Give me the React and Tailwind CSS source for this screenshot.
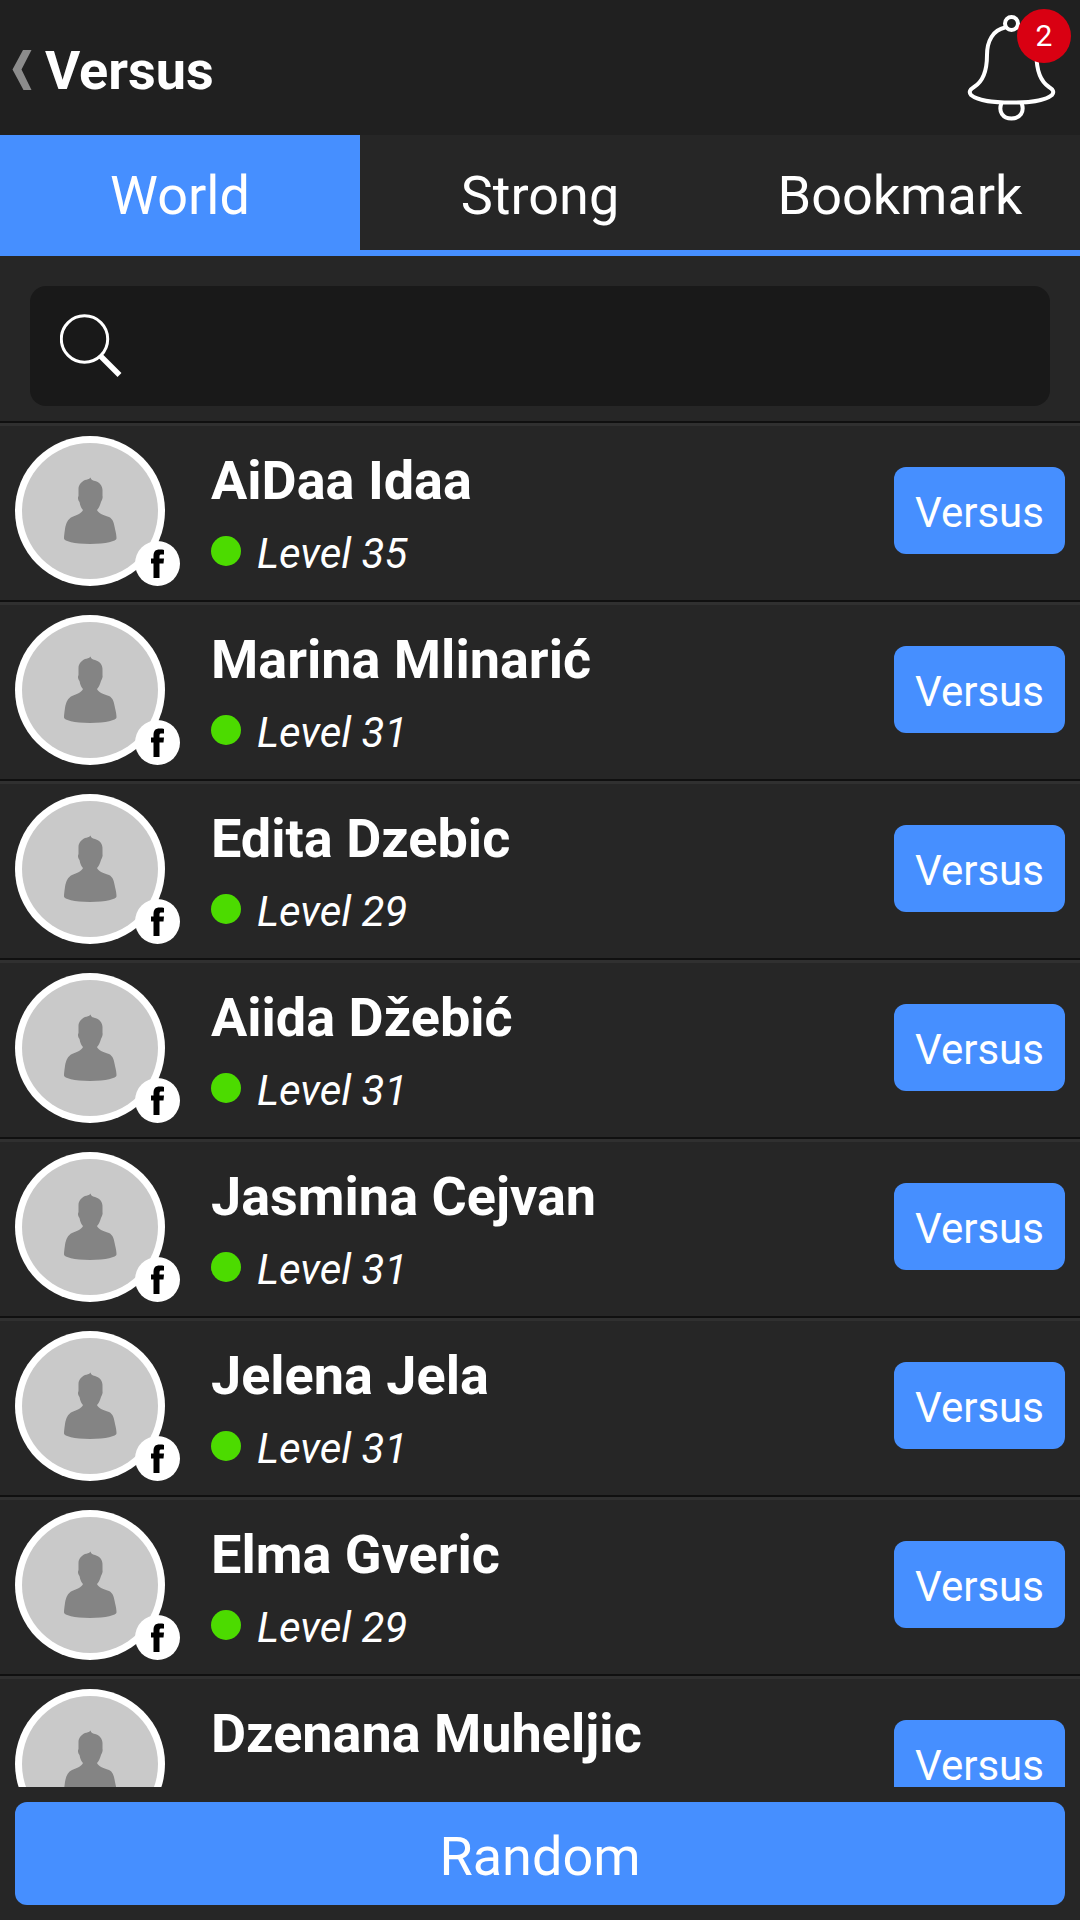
import { useState } from "react";

const TABS = ["World", "Strong", "Bookmark"];

const PLAYERS = [
  { name: "AiDaa Idaa", level: 35 },
  { name: "Marina Mlinarić", level: 31 },
  { name: "Edita Dzebic", level: 29 },
  { name: "Aiida Džebić", level: 31 },
  { name: "Jasmina Cejvan", level: 31 },
  { name: "Jelena Jela", level: 31 },
  { name: "Elma Gveric", level: 29 },
  { name: "Dzenana Muheljic" },
];

function BackIcon() {
  return (
    <svg width="20" height="44" viewBox="0 0 20 44" aria-hidden="true">
      <path d="M11 1H19.5L9.5 20.5L19.5 41H11.500L0.5 20.5Z" fill="#8c8c8c" />
    </svg>
  );
}

function BellIcon() {
  return (
    <svg width="90" height="108" viewBox="0 0 90 108" fill="none" stroke="#fff" strokeWidth="4" aria-hidden="true">
      <circle cx="44.500" cy="9.500" r="6.500" />
      <path d="M38 13.500C26 16 20 27 20 41C20 56 17 67 7 73C3 75.500 1.500 78 4 81C12 87.500 27 88.500 44.500 88.500S77 87.500 85 81C87.500 78 86 75.500 82 73C73 67 69.500 56 69.500 41C69.500 27 63 16 51 13.500" />
      <path d="M34.500 89C31 98 36 104.500 44.500 104.500S58 98 54.500 89" />
    </svg>
  );
}

function SearchIcon() {
  return (
    <svg className="shrink-0" width="64" height="64" viewBox="0 0 64 64" fill="none" stroke="#fff" aria-hidden="true">
      <circle cx="24.500" cy="25" r="23.200" strokeWidth="3" />
      <path d="M40.500 42L59.500 61" strokeWidth="5.500" />
    </svg>
  );
}

function Avatar() {
  return (
    <div className="relative size-[150px] shrink-0">
      <svg width="150" height="150" viewBox="0 0 150 150" aria-hidden="true">
        <circle cx="75" cy="75" r="75" fill="#fff" />
        <circle cx="75" cy="75" r="68" fill="#c9c9c9" />
        <path
          d="M75.500 41.500C76 43.500 77 44.200 80 45C85 46.500 88 50 87.500 56V60C88 62 87 64 86 66C85 70 83 73 82 74C83 77 88 79 94 81C98 83 99 87 100 93C101 97 101.500 100 101.500 102.500C101.500 105 91 108 75 108S49 105 49 102.500C49 100 49.500 97 50 93C51 87 53 83 57 81C62 79 67 77 68 74C67 73 65 70 64.500 66C63 64 62.500 62 63.500 60V53C63.500 49 66 46 70 44C72 43.500 74 43.500 75.500 41.500Z"
          fill="#848484"
        />
      </svg>
      <svg className="absolute right-[-15px] bottom-0" width="45" height="45" viewBox="0 0 45 45" aria-hidden="true">
        <circle cx="22.500" cy="22.500" r="22.500" fill="#fff" />
        <path d="M18.500 37V22.500H16V17.500H18.500V15C18.500 10.500 20.500 8.500 24.500 8.500C26.500 8.500 28 8.600 29 9V13.500H26.500C25 13.500 24.500 14 24.500 15.500V17.500H29L28.500 22.500H24.500V37Z" fill="#000" />
      </svg>
    </div>
  );
}

function PlayerRow({ name, level }) {
  return (
    <li className="flex h-[179px] items-start border-t-2 border-[#101010] px-[15px] pt-[13px] shadow-[inset_0_3px_0_#303030]">
      <Avatar />
      <div className="ml-[46px] flex min-w-0 flex-1 flex-col gap-4 pt-[13px]">
        <h2 className="truncate text-[54px] leading-[64px] font-bold">{name}</h2>
        {level !== undefined && (
          <p className="flex items-start gap-4 text-[42px] leading-[50px] italic">
            <span className="mt-[7px] size-[30px] rounded-full bg-[#4cdb00]" />
            Level {level}
          </p>
        )}
      </div>
      <button type="button" className="mt-[31px] h-[87px] w-[171px] rounded-xl bg-[#468fff] pt-1 text-[42px] leading-[50px]">
        Versus
      </button>
    </li>
  );
}

export default function App() {
  const [tab, setTab] = useState("World");
  return (
    <div className="flex h-screen flex-col overflow-hidden bg-[#262626] font-[Roboto,sans-serif] text-white">
      <header className="flex h-[135px] shrink-0 items-center justify-between bg-[#202020] pr-[23px] pl-3">
        <a href="#back" className="flex items-center gap-[13px] pt-1.5">
          <BackIcon />
          <h1 className="text-[54px] leading-[64px] font-bold">Versus</h1>
        </a>
        <button type="button" aria-label="Notifications" className="relative">
          <BellIcon />
          <span className="absolute top-[-5px] right-[-14px] flex size-[54px] items-center justify-center rounded-full bg-[#d90012] pt-px text-[30px] leading-[36px]">
            2
          </span>
        </button>
      </header>

      <div role="tablist" className="grid h-[121px] shrink-0 grid-cols-3 shadow-[inset_0_-6px_0_#468fff]">
        {TABS.map((t) => (
          <button
            key={t}
            type="button"
            role="tab"
            aria-selected={tab === t}
            onClick={() => setTab(t)}
            className="text-[54px] leading-[64px] aria-selected:bg-[#468fff]"
          >
            {t}
          </button>
        ))}
      </div>

      <div className="shrink-0 px-[30px] pt-[30px] pb-[15px]">
        <label className="flex h-[120px] items-center gap-6 rounded-2xl bg-[#191919] px-[30px]">
          <SearchIcon />
          <input type="text" aria-label="Search players" className="min-w-0 flex-1 bg-transparent text-[42px] outline-none" />
        </label>
      </div>

      <ul className="min-h-0 flex-1 overflow-hidden">
        {PLAYERS.map((p) => (
          <PlayerRow key={p.name} name={p.name} level={p.level} />
        ))}
      </ul>

      <footer className="shrink-0 p-[15px]">
        <button type="button" className="h-[103px] w-full rounded-xl bg-[#468fff] pt-1.5 text-[54px] leading-[64px]">
          Random
        </button>
      </footer>
    </div>
  );
}
